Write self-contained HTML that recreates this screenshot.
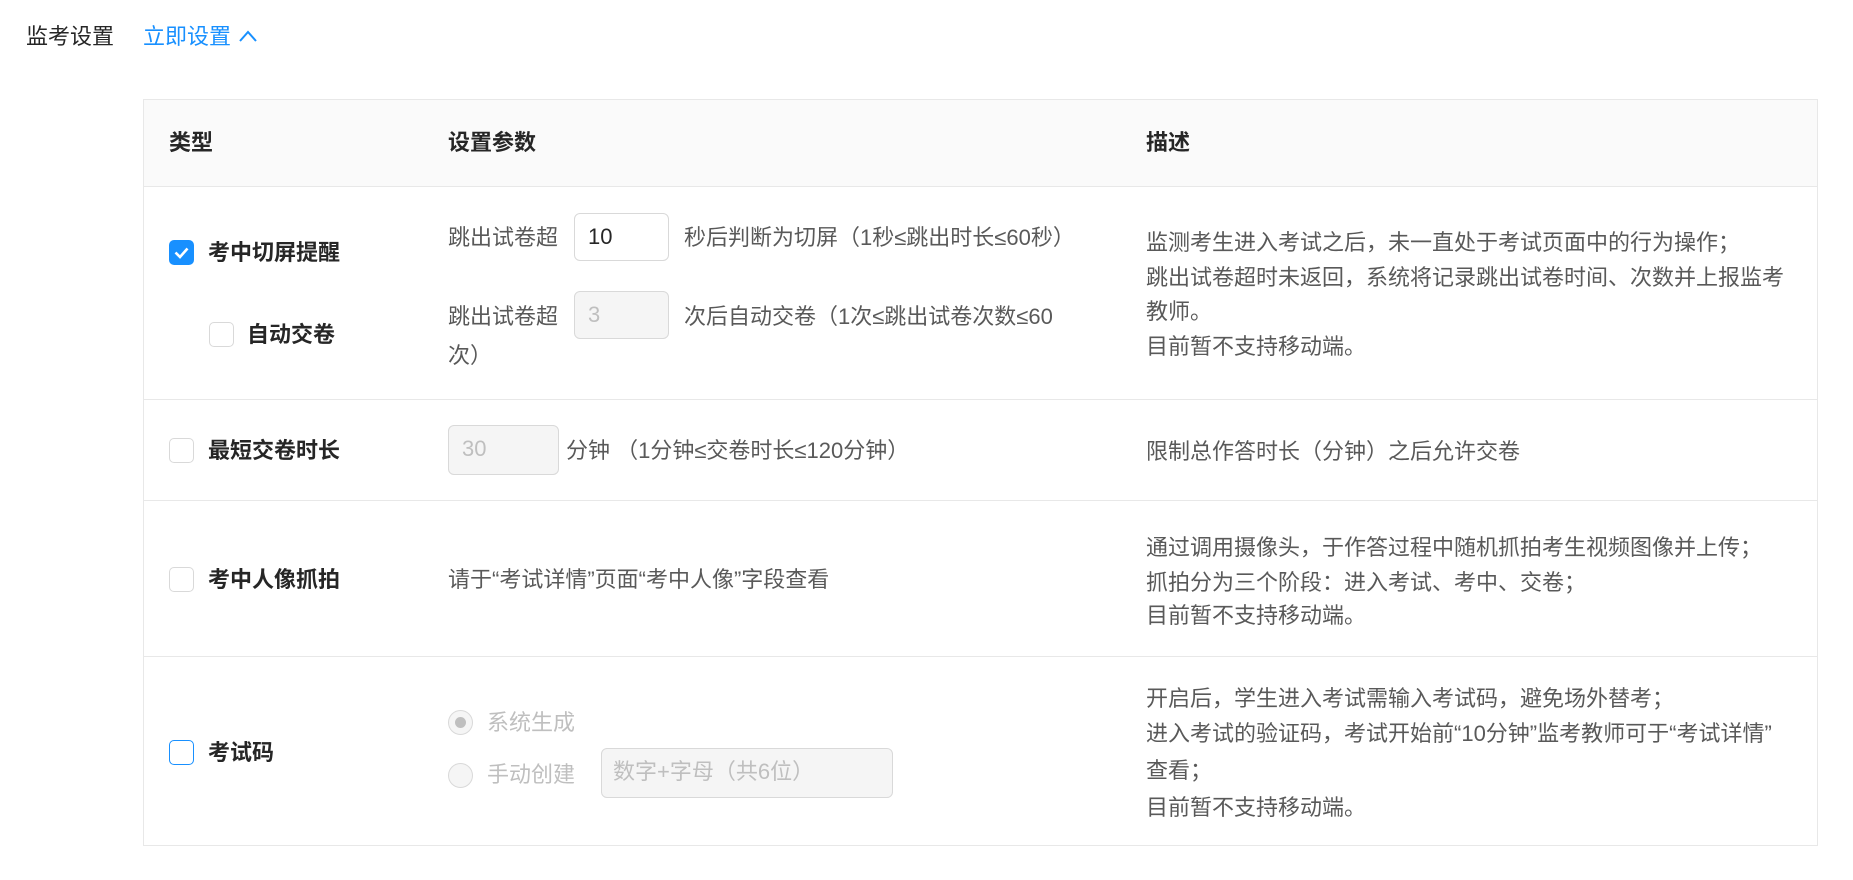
<!DOCTYPE html>
<html><head><meta charset="utf-8"><style>
*{margin:0;padding:0;box-sizing:border-box}
body{width:1853px;height:880px;background:#fff;position:relative;overflow:hidden;font-family:"Liberation Sans","Noto Sans CJK SC",sans-serif;font-size:22px;color:#595959}
.a{position:absolute;white-space:nowrap;line-height:34px}
.b{font-weight:bold;color:#262626}
.cb{position:absolute;width:25px;height:25px;border:1px solid #d9d9d9;border-radius:5px;background:#fff}
.in{position:absolute;border:1px solid #d9d9d9;border-radius:6px;background:#f5f5f5;color:#bfbfbf;padding-left:13px;line-height:46px}
.hl{position:absolute;left:143px;width:1675px;height:1px;background:#e8e8e8}
.rd{position:absolute;width:25px;height:25px;border:1px solid #d9d9d9;border-radius:50%;background:#f5f5f5}
.g{color:#bfbfbf}
</style></head><body>
<div class="a" style="left:26px;top:20px;color:#262626">监考设置</div>
<div class="a" style="left:143px;top:20px;color:#1890ff">立即设置</div>
<svg style="position:absolute;left:238px;top:29px" width="20" height="14"><path d="M2 12 L10 3 L18 12" stroke="#1890ff" stroke-width="2" fill="none"/></svg>

<div style="position:absolute;left:143px;top:99px;width:1675px;height:747px;border:1px solid #e8e8e8"></div>
<div style="position:absolute;left:144px;top:100px;width:1673px;height:86px;background:#fafafa"></div>
<div class="hl" style="top:186px"></div>
<div class="hl" style="top:399px"></div>
<div class="hl" style="top:500px"></div>
<div class="hl" style="top:656px"></div>

<div class="a b" style="left:169px;top:126px">类型</div>
<div class="a b" style="left:448px;top:126px">设置参数</div>
<div class="a b" style="left:1146px;top:126px">描述</div>

<!-- row1 -->
<div class="cb" style="left:169px;top:240px;background:#1890ff;border-color:#1890ff"><svg width="23" height="23" style="position:absolute;left:0;top:0"><path d="M5.5 11.5 L10 16 L17.5 7.5" stroke="#fff" stroke-width="2.6" fill="none"/></svg></div>
<div class="a b" style="left:208px;top:236px">考中切屏提醒</div>
<div class="cb" style="left:209px;top:322px"></div>
<div class="a b" style="left:247px;top:318px">自动交卷</div>
<div class="a" style="left:448px;top:221px">跳出试卷超</div>
<div class="in" style="left:574px;top:213px;width:95px;height:48px;background:#fff;color:#262626">10</div>
<div class="a" style="left:684px;top:221px">秒后判断为切屏（1秒≤跳出时长≤60秒）</div>
<div class="a" style="left:448px;top:300px">跳出试卷超</div>
<div class="in" style="left:574px;top:291px;width:95px;height:48px">3</div>
<div class="a" style="left:684px;top:300px">次后自动交卷（1次≤跳出试卷次数≤60</div>
<div class="a" style="left:448px;top:339px">次）</div>
<div class="a" style="left:1146px;top:226px">监测考生进入考试之后，未一直处于考试页面中的行为操作；</div>
<div class="a" style="left:1146px;top:261px">跳出试卷超时未返回，系统将记录跳出试卷时间、次数并上报监考</div>
<div class="a" style="left:1146px;top:295px">教师。</div>
<div class="a" style="left:1146px;top:330px">目前暂不支持移动端。</div>

<!-- row2 -->
<div class="cb" style="left:169px;top:438px"></div>
<div class="a b" style="left:208px;top:434px">最短交卷时长</div>
<div class="in" style="left:448px;top:425px;width:111px;height:50px">30</div>
<div class="a" style="left:566px;top:434px">分钟 （1分钟≤交卷时长≤120分钟）</div>
<div class="a" style="left:1146px;top:435px">限制总作答时长（分钟）之后允许交卷</div>

<!-- row3 -->
<div class="cb" style="left:169px;top:567px"></div>
<div class="a b" style="left:208px;top:563px">考中人像抓拍</div>
<div class="a" style="left:448px;top:563px">请于“考试详情”页面“考中人像”字段查看</div>
<div class="a" style="left:1146px;top:531px">通过调用摄像头，于作答过程中随机抓拍考生视频图像并上传；</div>
<div class="a" style="left:1146px;top:566px">抓拍分为三个阶段：进入考试、考中、交卷；</div>
<div class="a" style="left:1146px;top:599px">目前暂不支持移动端。</div>

<!-- row4 -->
<div class="cb" style="left:169px;top:740px;border-color:#1890ff"></div>
<div class="a b" style="left:208px;top:736px">考试码</div>
<div class="rd" style="left:448px;top:710px"><div style="position:absolute;left:6px;top:6px;width:11px;height:11px;border-radius:50%;background:#bfbfbf"></div></div>
<div class="a g" style="left:487px;top:706px">系统生成</div>
<div class="rd" style="left:448px;top:763px"></div>
<div class="a g" style="left:487px;top:758px">手动创建</div>
<div class="in" style="left:601px;top:748px;width:292px;height:50px;padding-left:11px">数字+字母（共6位）</div>
<div class="a" style="left:1146px;top:682px">开启后，学生进入考试需输入考试码，避免场外替考；</div>
<div class="a" style="left:1146px;top:717px">进入考试的验证码，考试开始前“10分钟”监考教师可于“考试详情”</div>
<div class="a" style="left:1146px;top:754px">查看；</div>
<div class="a" style="left:1146px;top:791px">目前暂不支持移动端。</div>
</body></html>
